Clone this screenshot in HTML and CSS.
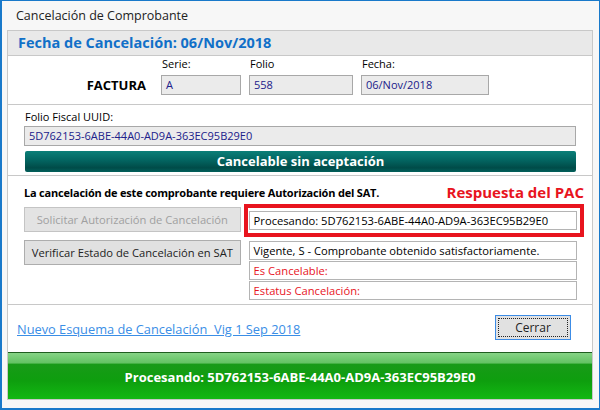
FILE: index.html
```html
<!DOCTYPE html>
<html>
    <head>
        <title>Cancelación de Comprobante</title>
        <link rel="stylesheet" href="styles.css">
    </head>
    <body>
        <div class="window">
            <!-- Title bar -->
            <div class="title-bar">Cancelación de Comprobante</div>

            <div class="panel">
                <div class="panel-header">Fecha de Cancelación: 06/Nov/2018</div>

                <!-- Document data -->
                <div class="section doc-section">
                    <div class="doc-type">FACTURA</div>
                    <div class="field serie">
                        <label>Serie:</label>
                        <div class="input">A</div>
                    </div>
                    <div class="field folio">
                        <label>Folio</label>
                        <div class="input">558</div>
                    </div>
                    <div class="field fecha">
                        <label>Fecha:</label>
                        <div class="input">06/Nov/2018</div>
                    </div>
                </div>

                <!-- UUID -->
                <div class="section uuid-section">
                    <label>Folio Fiscal UUID:</label>
                    <div class="input uuid">5D762153-6ABE-44A0-AD9A-363EC95B29E0</div>
                    <div class="status-bar">Cancelable sin aceptación</div>
                </div>

                <!-- SAT authorization -->
                <div class="section sat-section">
                    <div class="sat-head">
                        <span class="sat-note">La cancelación de este comprobante requiere Autorización del SAT.</span>
                        <span class="pac-title">Respuesta del PAC</span>
                    </div>
                    <div class="sat-body">
                        <div class="actions">
                            <button class="btn" disabled>Solicitar Autorización de Cancelación</button>
                            <button class="btn">Verificar Estado de Cancelación en SAT</button>
                        </div>
                        <div class="responses">
                            <div class="pac-box">
                                <div class="out">Procesando: 5D762153-6ABE-44A0-AD9A-363EC95B29E0</div>
                            </div>
                            <div class="out-list">
                                <div class="out">Vigente, S - Comprobante obtenido satisfactoriamente.</div>
                                <div class="out red">Es Cancelable:</div>
                                <div class="out red">Estatus Cancelación:</div>
                            </div>
                        </div>
                    </div>
                </div>

                <!-- Footer -->
                <div class="section footer-section">
                    <a href="#" class="link">Nuevo Esquema de Cancelación&nbsp; Vig 1 Sep 2018</a>
                    <button class="btn close-btn"><span>Cerrar</span></button>
                </div>

                <div class="progress-bar">Procesando: 5D762153-6ABE-44A0-AD9A-363EC95B29E0</div>
            </div>
        </div>
    </body>
</html>
```

FILE: styles.css
```css
/* Page and window frame */
body {
margin: 0;
padding: 0;
font-family: "Open Sans", "Noto Sans", sans-serif;
font-size: 12px;
color: #000;
}

.window {
width: 600px;
height: 410px;
box-sizing: border-box;
background-color: #f7f7f7;
border: 1px solid #1979ca;
border-left-width: 2px;
border-bottom-width: 2px;
display: flex;
flex-direction: column;
}

.title-bar {
height: 29px;
line-height: 29px;
padding-left: 14px;
font-size: 12.5px;
color: #222;
}

/* Main white panel */
.panel {
margin: 0 6px 0 5px;
border: 1px solid #c8c8c8;
background-color: #fff;
display: flex;
flex-direction: column;
}

.panel-header {
height: 24px;
line-height: 24px;
padding-left: 10px;
background-color: #e9e9e9;
border-bottom: 1px solid #c8c8c8;
color: #1170c8;
font-size: 14.5px;
font-weight: bold;
}

.section {
border-bottom: 1px solid #c8c8c8;
}

label {
display: block;
font-size: 11px;
line-height: 14px;
}

.input {
height: 18px;
line-height: 18px;
padding-left: 4px;
background-color: #ebebeb;
border: 1px solid #a8a8a8;
color: #20208a;
font-size: 11px;
}

/* Serie / Folio / Fecha row */
.doc-section {
height: 49px;
display: flex;
align-items: flex-end;
padding-bottom: 9px;
box-sizing: border-box;
}

.doc-type {
width: 138px;
text-align: right;
font-weight: bold;
font-size: 13px;
line-height: 20px;
margin-right: 15px;
}

.field label {
margin-bottom: 4px;
padding-left: 1px;
}

.serie { width: 80px; margin-right: 8px; }
.folio { width: 104px; margin-right: 8px; }
.fecha { width: 128px; }

/* UUID */
.uuid-section {
height: 71px;
padding: 5px 16px 0 16px;
box-sizing: border-box;
}

.uuid-section label {
font-size: 11px;
margin-bottom: 2px;
padding-left: 1px;
}

.uuid {
width: 546px;
}

.status-bar {
margin: 5px 0 0 1px;
width: 551px;
height: 21px;
line-height: 21px;
border-radius: 2px;
background: linear-gradient(#0b7f78, #036460 45%, #004b48 80%, #02605b);
color: #fff;
text-align: center;
font-weight: bold;
font-size: 13px;
}

/* SAT section */
.sat-section {
height: 129px;
padding: 5px 8px 0 16px;
box-sizing: border-box;
}

.sat-head {
display: flex;
justify-content: space-between;
align-items: center;
height: 22px;
}

.sat-note {
font-weight: bold;
font-size: 11px;
letter-spacing: -0.2px;
}

.pac-title {
color: #e8141e;
font-weight: bold;
font-size: 15px;
}

.sat-body {
display: flex;
margin-top: 1px;
}

.actions {
width: 217px;
padding-top: 3px;
margin-right: 3px;
display: flex;
flex-direction: column;
gap: 8px;
}

.btn {
height: 25px;
padding: 0;
background-color: #e1e1e1;
border: 1px solid #adadad;
font-family: "Open Sans", "Noto Sans", sans-serif;
font-size: 11.2px;
color: #222;
}

.btn:disabled {
color: #a0a0a0;
background-color: #e3e3e3;
border-color: #c4c4c4;
}

.responses {
width: 341px;
}

.pac-box {
border: 4px solid #e8141e;
padding: 3px 3px 3px 1px;
}

.out {
height: 17px;
line-height: 17px;
padding-left: 4px;
background-color: #fff;
border: 1px solid #b4b4b4;
font-size: 11.2px;
white-space: nowrap;
overflow: hidden;
}

.out.red {
color: #e8141e;
}

.out-list {
margin: 4px 0 0 5px;
width: 328px;
display: flex;
flex-direction: column;
gap: 1px;
}

/* Footer with link and close button */
.footer-section {
height: 47px;
display: flex;
align-items: center;
justify-content: space-between;
padding: 0 21px 0 9px;
box-sizing: border-box;
border-bottom: none;
}

.link {
color: #3a8ee6;
font-size: 12.8px;
}

.close-btn {
width: 76px;
margin-top: -2px;
border: 1px solid #3c8ce6;
padding: 2px;
}

.close-btn span {
display: block;
height: 17px;
line-height: 17px;
border: 1px dotted #222;
font-size: 12px;
}

/* Green progress bar */
.progress-bar {
height: 46px;
line-height: 48px;
border-top: 1px solid #1f5e1f;
background: linear-gradient(#86d486, #62c262 22%, #189a18 24%, #0e9e0e 60%, #12b812);
color: #fff;
text-align: center;
font-weight: bold;
font-size: 13px;
}
```
